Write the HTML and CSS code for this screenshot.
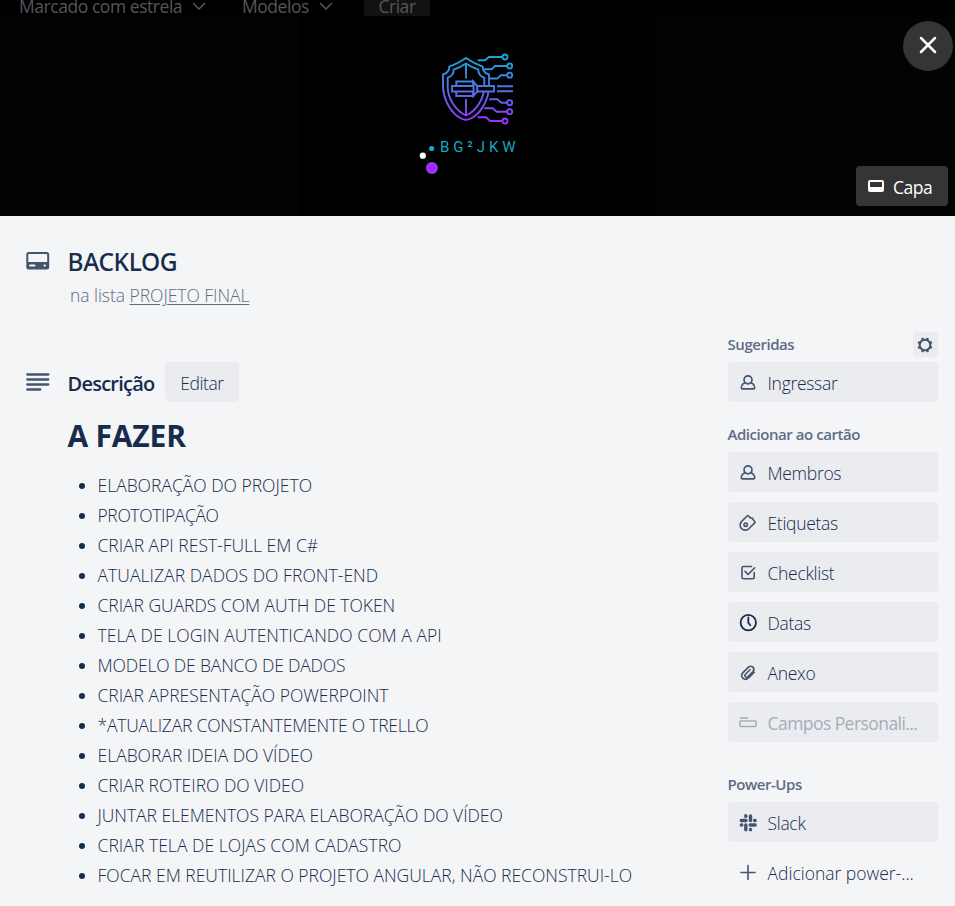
FILE: index.html
```html
<!DOCTYPE html>
<html lang="pt-BR">
<head>
<meta charset="utf-8">
<title>BACKLOG</title>
<link rel="stylesheet" href="styles.css">
</head>
<body>
<nav class="nav">
  <span class="nav-link starred">Marcado com estrela</span>
  <svg class="chevron" width="14" height="8" viewBox="0 0 14 8"><path d="M1 1l6 6 6-6"/></svg>
  <span class="nav-link models">Modelos</span>
  <svg class="chevron" width="14" height="8" viewBox="0 0 14 8"><path d="M1 1l6 6 6-6"/></svg>
  <span class="create">Criar</span>
</nav>
<header class="cover">
  <div class="cover-art">
    <svg class="logo" width="120" height="145" viewBox="0 0 120 145">
      <defs><linearGradient id="g" gradientUnits="userSpaceOnUse" x1="0" y1="14" x2="0" y2="84"><stop offset="0" stop-color="#12abcf"/><stop offset=".45" stop-color="#4779e6"/><stop offset="1" stop-color="#a02fff"/></linearGradient></defs>
      <g fill="none" stroke="url(#g)" stroke-width="1.900">
        <path d="M56 18q-8 5.500-16.700 8.700 0 6-6.300 7.800v10.500c0 16 9 29 18 33.500q5 2.500 10 0c9-4.500 18-17.500 18-33.500V34.500q-6.300-1.800-6.300-7.800Q64 23.500 56 18z"/>
        <path d="M56 23.500q-6 4-12.300 6.200 0 6-6 8v8.800c0 12 8 24.500 18.300 29 10.300-4.500 18.300-17 18.300-29v-8.800q-6-2-6-8Q62 27.500 56 23.500z"/>
        <path d="M56 23v15.500M56 59v16.500"/>
        <path fill="#000" d="M46.300 41.500h17v14.500h-17z"/>
        <path fill="#000" d="M63.300 41.500l4 4.500v5.300l-4 4.700z"/>
        <path fill="#000" d="M42 46h21.500v5.500H42zM67.300 46H84v5.500H67.300z"/>
        <path d="M87 46.300h16M87 51.200h16"/>
        <path d="M67.700 20.300H75l4-3.300h13.500M74.300 29.300h7.400L85 26h12M79.300 38.500h8l3.700-3.300h6M79.300 59.300h8l4 3.400H97M74.300 68.300h8.400l4 3.400H97M67.700 77.300H76l4 3.700h12.500"/>
      </g>
      <g fill="#000" stroke="url(#g)" stroke-width="1.800"><circle cx="95" cy="17" r="2.500"/><circle cx="99.700" cy="26" r="2.500"/><circle cx="99.700" cy="35.200" r="2.500"/><circle cx="99.700" cy="62.700" r="2.500"/><circle cx="99.700" cy="71.700" r="2.500"/><circle cx="95" cy="81" r="2.500"/></g>
      <path d="M21 108l-8 7 9 13" fill="none" stroke="#1a1a1a"/>
      <circle cx="21.700" cy="108.500" r="2.600" fill="#13abcd"/><circle cx="12.800" cy="115.700" r="3.100" fill="#fff"/><circle cx="21.900" cy="128" r="6" fill="#9c31ff"/>
      <text class="logo-text" x="30" y="112" textLength="75.500">BG²JKW</text>
    </svg>
  </div>
  <button class="close" aria-label="Fechar"><svg width="18" height="18" viewBox="0 0 18 18"><path d="M2 2l14 14M16 2L2 16"/></svg></button>
  <button class="cover-button"><svg width="16" height="12" viewBox="0 0 16 12"><rect x="1" y="1" width="14" height="10" rx="1" fill="none" stroke="#fff" stroke-width="2"/><path d="M1 7h14v4H1z" fill="#fff"/></svg><span>Capa</span></button>
</header>
<main class="body">
  <section class="content">
    <div class="title-row">
      <svg width="24" height="20" viewBox="0 0 24 20"><rect x="1.300" y="2" width="20.900" height="15.500" rx="1.500" fill="none" stroke="#44546f" stroke-width="2"/><path d="M1 11h21v6.500H1z" fill="#44546f"/><path d="M4 14.500h4.500M18.500 14.500h.5" stroke="#f4f5f7" stroke-width="2" stroke-linecap="round"/></svg>
      <h1>BACKLOG</h1>
    </div>
    <p class="in-list">na lista <a>PROJETO FINAL</a></p>
    <div class="desc-row">
      <svg width="24" height="20" viewBox="0 0 24 20"><path d="M1.300 2.500h21M1.300 7.500h21M1.300 12.500h21M1.300 17.500h13" stroke="#44546f" stroke-width="2.300" stroke-linecap="round"/></svg>
      <h2>Descrição</h2><button class="edit">Editar</button>
    </div>
    <h3>A FAZER</h3>
    <ul class="tasks">
      <li>ELABORAÇÃO DO PROJETO</li><li>PROTOTIPAÇÃO</li><li>CRIAR API REST-FULL EM C#</li><li>ATUALIZAR DADOS DO FRONT-END</li><li>CRIAR GUARDS COM AUTH DE TOKEN</li><li>TELA DE LOGIN AUTENTICANDO COM A API</li><li>MODELO DE BANCO DE DADOS</li><li>CRIAR APRESENTAÇÃO POWERPOINT</li><li>*ATUALIZAR CONSTANTEMENTE O TRELLO</li><li>ELABORAR IDEIA DO VÍDEO</li><li>CRIAR ROTEIRO DO VIDEO</li><li>JUNTAR ELEMENTOS PARA ELABORAÇÃO DO VÍDEO</li><li>CRIAR TELA DE LOJAS COM CADASTRO</li><li>FOCAR EM REUTILIZAR O PROJETO ANGULAR, NÃO RECONSTRUI-LO</li>
    </ul>
  </section>
  <aside class="sidebar">
    <div class="side-head"><h4>Sugeridas</h4><span class="gear"><svg width="17" height="16" viewBox="0 0 17 16"><circle cx="8" cy="8" r="5.300"/><path class="teeth" d="M12.900 10l2 .9M10 12.900l.9 2M6 12.900l-.9 2M3.100 10l-2 .9M3.100 6l-2-.9M6 3.100l-.9-2M10 3.100l.9-2M12.900 6l2-.9"/></svg></span></div>
    <div class="item"><svg viewBox="0 0 20 20"><path d="M7.200 9.700a4 4 0 1 1 5.600 0c2.200.7 3.700 2.600 3.900 5 0 .8-.4 1.200-1.200 1.200h-11c-.8 0-1.200-.4-1.200-1.200.2-2.400 1.700-4.300 3.900-5zM7.200 9.700c1.600 1.400 4 1.400 5.600 0"/></svg><span>Ingressar</span></div>
    <h4 class="group add">Adicionar ao cartão</h4>
    <div class="item"><svg viewBox="0 0 20 20"><path d="M7.200 9.700a4 4 0 1 1 5.600 0c2.200.7 3.700 2.600 3.900 5 0 .8-.4 1.200-1.200 1.200h-11c-.8 0-1.200-.4-1.200-1.200.2-2.400 1.700-4.300 3.900-5zM7.200 9.700c1.600 1.400 4 1.400 5.600 0"/></svg><span>Membros</span></div>
    <div class="item"><svg viewBox="0 0 20 20"><path d="M3.700 8.400l5.400-5.400q.7-.7 1.400 0l1.900 1.900 1.700.2 2.700 3.600q.4.600-.1 1.200l-5.900 5.900c-2 1.800-5.200 1.600-6.900.1-2.400-2-2.200-5.300-.2-7.500z"/><circle cx="7.700" cy="11.700" r="1.700"/></svg><span>Etiquetas</span></div>
    <div class="item"><svg viewBox="0 0 20 20"><path d="M13.500 3.500h-8Q4 3.500 4 5v9.200q0 1.500 1.500 1.500h9.200q1.500 0 1.500-1.500V9.600M7 8.300l3 3.200 6.700-6.700"/></svg><span>Checklist</span></div>
    <div class="item"><svg class="clock" viewBox="0 0 20 20"><circle cx="10.300" cy="9.600" r="7.700"/><path d="M10.300 4.500v5.200l2 2.500"/></svg><span>Datas</span></div>
    <div class="item"><svg viewBox="0 0 20 20"><path d="M16.200 9.200l-5.500 5.500c-4.300 4-9.500-1-5.500-5.300l5-5c3.300-3 7.600 1 4.600 4.300l-4.700 4.800c-2 1.800-4.300-.3-2.600-2.300l4.500-4.500"/></svg><span>Anexo</span></div>
    <div class="item disabled"><svg viewBox="0 0 20 20"><path d="M2.500 5h7M3 8h14q1 0 1 1v3.500q0 1-1 1H3q-1 0-1-1V9q0-1 1-1z"/></svg><span>Campos Personali...</span></div>
    <h4 class="group power">Power-Ups</h4>
    <div class="item"><svg class="slack" viewBox="0 0 20 20"><path d="M8 7.500H3.300M12.500 3v4.500M12.200 12h5M7.800 12v4.700M7.800 2.800v.6M17.200 7.500h-.6M12.500 16.700v-.3M3.300 12h.5"/></svg><span>Slack</span></div>
    <div class="item plain"><svg viewBox="0 0 20 20"><path d="M10 2.500v14M3 9.500h14"/></svg><span>Adicionar power-...</span></div>
  </aside>
</main>
</body>
</html>
```
FILE: styles.css
```css
* { box-sizing: border-box; }
body { margin: 0; width: 955px; height: 906px; overflow: hidden; background: #f4f5f7; color: #172b4d; font: 300 17.5px/25px "Open Sans", "Noto Sans", sans-serif; letter-spacing: -.45px; }
h1, h2, h3, h4, p, ul { margin: 0; padding: 0; }
button { border: 0; font: inherit; letter-spacing: inherit; padding: 0; }
svg { flex: none; }
.nav { height: 16px; background: #000; color: #565656; display: flex; align-items: flex-start; padding-left: 19px; font-weight: 400; }
.nav-link, .create { line-height: 13px; white-space: nowrap; }
.starred { width: 173px; }
.models { width: 77px; margin-left: 36px; }
.chevron { margin-top: 2px; fill: none; stroke: #565656; stroke-width: 1.5; }
.create { margin-left: 31px; width: 66px; height: 16px; background: #121212; text-align: center; }
.cover { height: 200px; background: #030303; display: flex; justify-content: center; position: relative; }
.cover-art { width: 355px; background: #000; padding: 24px 0 0 110px; }
.logo { display: block; }
.logo-text { font: 400 15px "Roboto", sans-serif; fill: #13a9c5; letter-spacing: 0; }
.close { position: absolute; right: 2px; top: 5px; width: 50px; height: 50px; border-radius: 50%; background: #353535; display: flex; align-items: center; justify-content: center; }
.close svg { stroke: #fff; stroke-width: 2.5; stroke-linecap: round; margin: 0 1px 2px 0; }
.cover-button { position: absolute; right: 7px; bottom: 10px; width: 92px; height: 40px; border-radius: 4px; background: #353535; color: #fff; display: flex; align-items: center; padding-left: 12px; gap: 9px; font-weight: 400; }
.cover-button span { padding-top: 3px; }
.body { display: flex; height: 690px; }
.content { width: 728px; padding: 32px 0 0 25.5px; }
.title-row { display: flex; height: 30px; gap: 18px; }
.title-row svg { margin-top: 3px; }
h1 { font-family: "Noto Sans", sans-serif; font-size: 24.5px; line-height: 28px; font-weight: 500; letter-spacing: -.35px; }
.in-list { margin-left: 44.5px; margin-top: 5px; color: #5e6c84; letter-spacing: -.04px; }
.in-list a { text-decoration: underline; text-underline-offset: 2px; }
.desc-row { display: flex; height: 40px; margin-top: 54px; }
.desc-row svg { margin: 10px 18px 0 0; }
h2 { width: 97.5px; font-size: 20px; line-height: 43px; font-weight: 600; letter-spacing: -.75px; }
.edit { width: 74px; height: 40px; border-radius: 4px; background: #eaecf0; color: #172b4d; padding-top: 3px; }
h3 { margin: 14px 0 0 42px; font-size: 30px; line-height: 40px; font-weight: 700; letter-spacing: -.2px; }
.tasks { margin: 14px 0 0 72px; }
.tasks li { line-height: 30px; white-space: nowrap; letter-spacing: 0; }
.tasks li:nth-child(2) { letter-spacing: -.38px; }
.tasks li:nth-child(6), .tasks li:nth-child(4), .tasks li:nth-child(13) { letter-spacing: .05px; }
.tasks li:nth-child(5), .tasks li:nth-child(8), .tasks li:nth-child(12) { letter-spacing: -.03px; }
.tasks li:nth-child(7) { letter-spacing: -.15px; }
.tasks li:nth-child(9) { letter-spacing: -.21px; }
.sidebar { width: 210px; padding-top: 116px; }
h4 { font-size: 15px; line-height: 25px; font-weight: 600; color: #5e6c84; letter-spacing: -.45px; margin-left: -.5px; }
.side-head { display: flex; justify-content: space-between; height: 30px; }
.gear { width: 25px; height: 25px; border-radius: 4px; background: #eaecf0; display: flex; align-items: center; justify-content: center; }
.gear svg { fill: none; stroke: #44546f; stroke-width: 2; }
.gear .teeth { stroke-width: 2.4; }
.item { height: 40px; margin-bottom: 10px; background: #eaecf0; border-radius: 4px; display: flex; padding-left: 9.5px; white-space: nowrap; letter-spacing: -.3px; }
.item svg { width: 20px; height: 20px; margin: 10.5px 10px 0 0; fill: none; stroke: #44546f; stroke-width: 1.6; stroke-linecap: round; stroke-linejoin: round; }
.item span { line-height: 43px; }
.item svg.clock { stroke: #172b4d; stroke-width: 1.8; }
.item svg.slack { stroke-width: 3.4; }
.group.add { margin-top: 20px; margin-bottom: 5px; }
.group.power { margin-top: 30px; margin-bottom: 5px; }
.disabled { color: #a5adba; font-weight: 400; letter-spacing: -.56px; }
.item.disabled svg { stroke: #a5adba; }
.plain { background: none; letter-spacing: 0; }
```
